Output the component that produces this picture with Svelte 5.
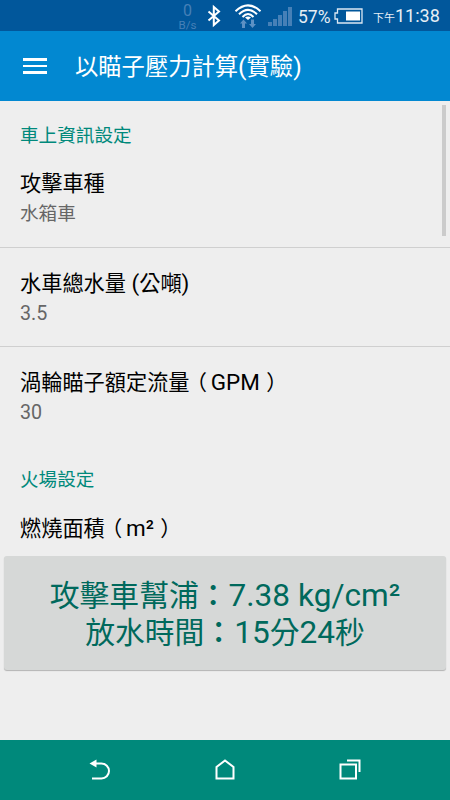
<script>
  let sections = [
    {
      title: "車上資訊設定",
      items: [
        { label: "攻擊車種", value: "水箱車" },
        { label: "水車總水量 (公噸)", value: "3.5" },
        { label: "渦輪瞄子額定流量（GPM）", value: "30" },
      ],
    },
    {
      title: "火場設定",
      items: [{ label: "燃燒面積（m²）", value: "" }],
    },
  ];

  let pressure = $state("7.38");
  let minutes = $state(15);
  let seconds = $state(24);

  // Latin runs are set slightly larger than the Chinese glyphs,
  // full-width punctuation is centred in its cell
  function split(text) {
    return text
      .split(/([\x20-\x7e²]+|[（）：])/)
      .filter((t) => t)
      .map((t) => ({ text: t, kind: kindOf(t) }));
  }

  function kindOf(t) {
    if (t === "（") return "open";
    if (t === "）") return "close";
    if (t === "：") return "colon";
    return /^[\x20-\x7e²]+$/.test(t) ? "latin" : "";
  }
</script>

{#snippet mixed(text)}
  {#each split(text) as part}<span class={part.kind}>{part.text}</span>{/each}
{/snippet}

<div class="screen">
  <div class="status">
    <div class="speed"><span class="num">0</span><span>B/s</span></div>
    <svg class="bluetooth" width="14" height="24" viewBox="0 0 14 24">
      <path d="M1.5 7.5 12 16.5 6.8 21V3L12 7.5 1.5 16.5" fill="none" stroke="#fff" stroke-width="2" />
    </svg>
    <svg class="wifi" width="28" height="26" viewBox="0 0 28 26">
      <g fill="none" stroke="#fff" stroke-width="2">
        <path d="M1.5 8.2Q14-3.5 26.5 8.2" />
        <path d="M5 11.3Q14 2.5 23 11.3" />
        <path d="M8.5 14Q14 8.2 19.5 14" />
      </g>
      <path d="M11 14.5Q14 12.5 17 14.5L14 17Z" fill="#fff" />
      <path d="M9.5 16.5 13 20.5H11V25H8V20.5H6ZM18.5 25 22 21H20V16.5H17V21H15Z" fill="#5d91c4" />
    </svg>
    <svg class="signal" width="24" height="20" viewBox="0 0 24 20">
      <path d="M0 15h4v4H0zM5 12h4v7H5zM10 8h4v11h-4zM15 4h4v15h-4zM20 0h4v19h-4z" fill="#4680b7" />
    </svg>
    <span class="percent">57%</span>
    <svg class="battery" width="29" height="16" viewBox="0 0 29 16">
      <path d="M3.5 1H28V15H3.5V11H1V5H3.5Z" fill="none" stroke="#dce8f3" stroke-width="1.3" />
      <path d="M12 3.5h14v9H12z" fill="#fff" />
    </svg>
    <span class="ampm">下午</span>
    <span class="clock">11:38</span>
  </div>

  <header>
    <button class="menu" aria-label="menu"><i></i><i></i><i></i></button>
    <h1>{@render mixed("以瞄子壓力計算(實驗)")}</h1>
  </header>

  <main>
    <div class="list">
      {#each sections as section}
        <h2>{section.title}</h2>
        {#each section.items as item, i}
          <div class="item" class:last={i === section.items.length - 1}>
            <div class="label">{@render mixed(item.label)}</div>
            <div class="value">{@render mixed(item.value)}</div>
          </div>
        {/each}
      {/each}
      <div class="scrollbar"></div>
    </div>
    <button class="result">
      <div>{@render mixed(`攻擊車幫浦：${pressure} kg/cm²`)}</div>
      <div>{@render mixed(`放水時間：${minutes}分${seconds}秒`)}</div>
    </button>
  </main>

  <nav>
    <button aria-label="back">
      <svg width="24" height="24" viewBox="0 0 24 24">
        <path d="M6 5.5H13.5A7 7 0 0 1 13.5 20.5H4" fill="none" stroke="#fff" stroke-width="2" />
        <path d="M1.5 5.5 8.5 1.5V9.5Z" fill="#fff" />
      </svg>
    </button>
    <button aria-label="home">
      <svg width="24" height="24" viewBox="0 0 24 24">
        <path d="M3.5 20.5V9L12 2.5 20.5 9V20.5Z" fill="none" stroke="#fff" stroke-width="2" />
      </svg>
    </button>
    <button aria-label="recent apps">
      <svg width="24" height="24" viewBox="0 0 24 24">
        <path d="M2.5 6.5H18V20.5H2.5ZM9 2.5H21.5V14" fill="none" stroke="#fff" stroke-width="2" />
      </svg>
    </button>
  </nav>
</div>

<style>
  :global(body) {
    margin: 0;
  }
  .screen {
    display: flex;
    flex-direction: column;
    width: 450px;
    height: 800px;
    overflow: hidden;
    background: #eee;
    font-family: Roboto, "Noto Sans CJK TC", sans-serif;
  }
  button {
    border: none;
    padding: 0;
    margin: 0;
    background: none;
    font-family: inherit;
  }
  svg {
    display: block;
    flex-shrink: 0;
  }
  .latin {
    font-size: 1.06em;
    white-space: pre;
  }
  .open {
    margin: 0 0.18em 0 -0.18em;
  }
  .close {
    margin: 0 -0.3em 0 0.3em;
  }
  .colon {
    margin: 0 0.02em 0 -0.02em;
    font-weight: 500;
  }

  .status {
    box-sizing: border-box;
    display: flex;
    align-items: center;
    height: 31px;
    padding-left: 178px;
    background: #01579b;
    color: #e6eef5;
    white-space: nowrap;
  }
  .speed {
    display: flex;
    flex-direction: column;
    align-items: center;
    width: 19px;
    margin-top: 1px;
    color: #4680b7;
    font-size: 11.5px;
    line-height: 12px;
  }
  .speed .num {
    font-size: 16px;
    line-height: 17px;
  }
  .bluetooth {
    margin-left: 10px;
  }
  .wifi {
    margin-left: 13px;
  }
  .signal {
    margin-left: 6px;
    margin-top: 3px;
  }
  .percent {
    width: 32px;
    margin-left: 6px;
    margin-top: 2px;
    font-size: 17.5px;
  }
  .battery {
    margin-left: 4px;
  }
  .ampm {
    width: 22px;
    margin-left: 10px;
    margin-top: 3px;
    font-size: 11px;
  }
  .clock {
    font-size: 18px;
  }

  header {
    display: flex;
    align-items: center;
    height: 70px;
    background: #0288d1;
    color: #fff;
  }
  .menu {
    display: flex;
    flex-direction: column;
    gap: 4px;
    width: 24px;
    margin-left: 23px;
  }
  .menu i {
    height: 2.7px;
    background: #fff;
  }
  h1 {
    margin: 1px 0 0 28px;
    font-size: 23.3px;
    font-weight: 400;
    line-height: 30px;
    white-space: nowrap;
  }

  main {
    display: flex;
    flex-direction: column;
    height: 639px;
  }
  .list {
    position: relative;
    height: 451px;
    overflow: hidden;
  }
  .scrollbar {
    position: absolute;
    top: 4px;
    right: 4px;
    width: 4px;
    height: 131px;
    background: #cbcbcb;
  }
  h2 {
    margin: 0;
    padding: 22px 20px 0;
    color: #00897b;
    font-size: 18.6px;
    font-weight: 400;
    line-height: 26px;
  }
  h2 ~ h2 {
    padding-top: 21px;
  }
  .item {
    box-sizing: border-box;
    height: 99px;
    padding: 21px 20px 0;
    border-bottom: 1px solid #cfcfcf;
    white-space: nowrap;
  }
  .item.last {
    border-bottom-color: transparent;
  }
  .label {
    color: #000;
    font-size: 21.2px;
    line-height: 28px;
  }
  .value {
    color: #666;
    font-size: 18.6px;
    line-height: 32px;
  }
  .result {
    display: flex;
    flex-direction: column;
    align-items: center;
    justify-content: center;
    box-sizing: border-box;
    height: 114px;
    margin: 4px;
    padding-top: 2px;
    border-radius: 3px;
    background: #d6d8d7;
    box-shadow: 0 1px 1px rgba(0, 0, 0, 0.25);
    color: #00695c;
    font-size: 29.8px;
    line-height: 37px;
    white-space: nowrap;
  }

  nav {
    display: flex;
    align-items: center;
    justify-content: space-between;
    flex: 1;
    padding: 0 88px;
    background: #00897b;
  }
</style>
